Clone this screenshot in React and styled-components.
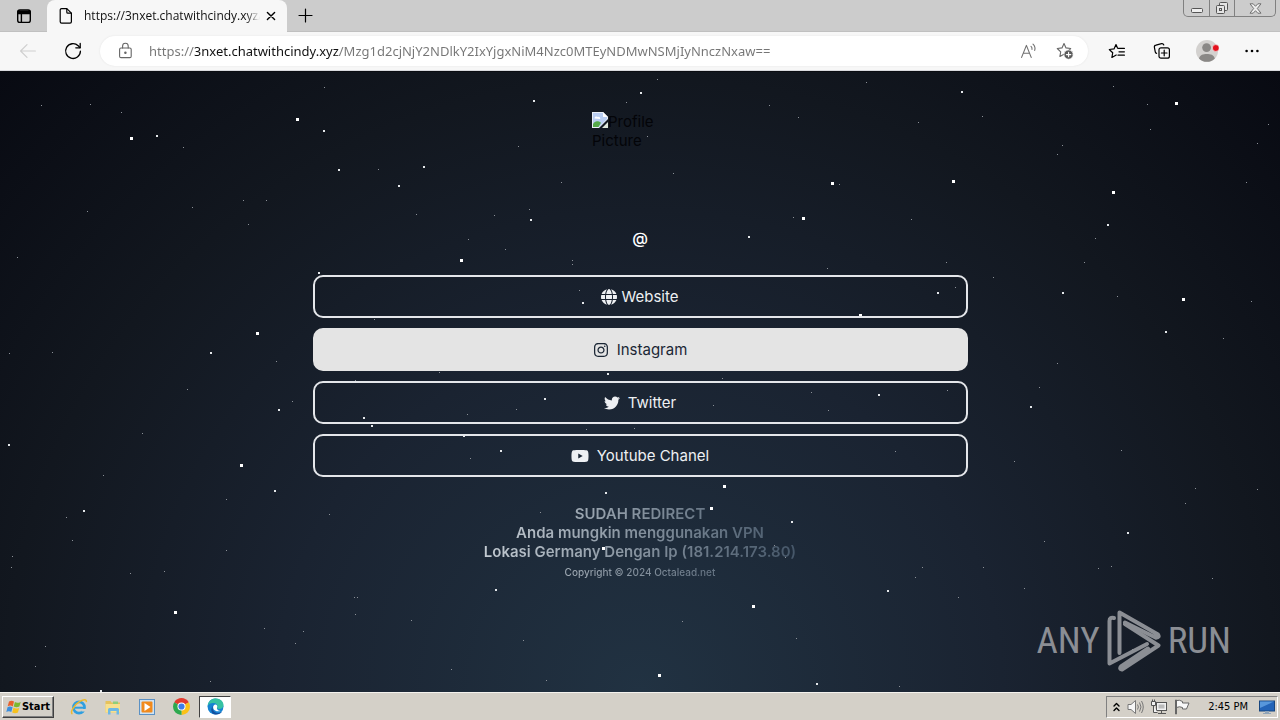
import React, { useState } from 'react';
import styled, { createGlobalStyle, css } from 'styled-components';
import { FaGlobe, FaInstagram, FaTwitter, FaYoutube } from 'react-icons/fa6';

const GlobalStyle = createGlobalStyle`
  * {
    box-sizing: border-box;
  }
  body {
    margin: 0;
    font-family: "Open Sans", "Noto Sans", sans-serif;
  }
  button {
    font-family: inherit;
    padding: 0;
    border: none;
    background: none;
    color: inherit;
  }
`;

const Desktop = styled.div`
  min-height: 100vh;
  display: flex;
  flex-direction: column;
  background: #d4d0c8;
`;

/* browser chrome */

const TabStrip = styled.header`
  height: 32px;
  display: flex;
  align-items: stretch;
  background: #cccccc;
  border-bottom: 1px solid #c0c0c0;
`;

const StripButton = styled.button`
  width: ${({ $width }) => $width}px;
  display: flex;
  align-items: center;
  justify-content: center;
`;

const Tab = styled.div`
  width: 240px;
  height: 32px;
  display: flex;
  align-items: center;
  padding: 0 9px 0 11px;
  background: #f7f7f7;
  border-radius: 8px 8px 0 0;
`;

const TabTitle = styled.span`
  flex: 1;
  margin: 0 4px 0 10px;
  overflow: hidden;
  white-space: nowrap;
  font-size: 12px;
  line-height: 16px;
  color: #111;
  mask-image: linear-gradient(to right, #000 92%, transparent 100%);
`;

const Spacer = styled.div`
  flex: 1;
`;

const WindowControls = styled.div`
  display: flex;
  height: 17px;
  margin-right: 4px;
  border: 1px solid #808080;
  border-top: none;
  border-radius: 0 0 5px 5px;
`;

const ControlButton = styled.button`
  width: ${({ $wide }) => ($wide ? 41 : 25)}px;
  display: flex;
  align-items: center;
  justify-content: center;
  & + & {
    border-left: 1px solid #808080;
  }
`;

const Toolbar = styled.div`
  height: 39px;
  display: flex;
  align-items: center;
  padding: 0 6px 0 5px;
  background: #f7f7f7;
  border-bottom: 1px solid #d9dade;
`;

const ToolButton = styled.button`
  width: 45px;
  height: 30px;
  display: flex;
  align-items: center;
  justify-content: center;
`;

const AddressBar = styled.label`
  flex: 1;
  height: 30px;
  display: flex;
  align-items: center;
  margin: 0 6px 0 5px;
  padding: 0 5px 0 18px;
  border-radius: 15px;
  background: #ffffff;
  box-shadow: 0 0 2px #e2e2e2;
`;

const AddressInput = styled.input`
  flex: 1;
  min-width: 0;
  height: 24px;
  margin-left: 16px;
  padding: 0;
  border: none;
  outline: none;
  font-family: "Noto Sans", "Open Sans", sans-serif;
  font-size: 13px;
  -webkit-text-fill-color: transparent;
  background: linear-gradient(to right, #757575 46px, #111 46px, #111 190px, #757575 190px);
  background-clip: text;
  -webkit-background-clip: text;
`;

const BarButton = styled.button`
  width: 36px;
  height: 24px;
  display: flex;
  align-items: center;
  justify-content: center;
`;

/* web page */

const Page = styled.main`
  position: relative;
  flex: 1;
  overflow: hidden;
  display: flex;
  flex-direction: column;
  align-items: center;
  padding: 40px 20px 0;
  border-top: 1px solid #0b0d12;
  background: radial-gradient(ellipse at bottom, #213242 0%, #1a2331 40%, #12171f 70%, #080a12 100%);
  font-family: Inter, "Liberation Sans", sans-serif;
  font-size: 15px;
  line-height: 19px;
`;

const Sky = styled.svg`
  position: absolute;
  top: 0;
  left: 0;
  width: 100%;
  height: 100%;
  pointer-events: none;
`;

const Avatar = styled.div`
  width: 96px;
  height: 96px;
  color: #030408;
  svg {
    vertical-align: top;
  }
`;

const Handle = styled.h1`
  margin: 21px 0 27px;
  font-size: 16px;
  line-height: 19px;
  font-weight: 500;
  color: #ffffff;
`;

const LinkList = styled.nav`
  position: relative;
  width: 100%;
  max-width: 655px;
  display: flex;
  flex-direction: column;
  gap: 10px;
`;

const LinkButton = styled.a`
  height: 43px;
  display: flex;
  align-items: center;
  justify-content: center;
  gap: ${({ $tight }) => ($tight ? 4 : 8)}px;
  border: 2px solid #e4e6ea;
  border-radius: 10px;
  color: #eef0f3;
  text-decoration: none;
  ${({ $active }) =>
    $active &&
    css`
      background: #e4e4e4;
      border-color: #e4e4e4;
      color: #1b2735;
    `}
`;

const Footer = styled.footer`
  width: 100%;
  max-width: 655px;
  margin-top: 27px;
  text-align: center;
  font-weight: 600;
  background: linear-gradient(to right, #e8edf1 12%, #3a4c5f 78%);
  background-clip: text;
  -webkit-background-clip: text;
  -webkit-text-fill-color: transparent;
  p {
    margin: 0;
  }
`;

const Copyright = styled.small`
  display: block;
  font-size: 10px;
  line-height: 22px;
  font-weight: 500;
`;

const Watermark = styled.div`
  position: absolute;
  right: 49px;
  bottom: 20px;
  display: flex;
  align-items: center;
  gap: 7px;
  font-family: "Roboto Condensed", "Open Sans Condensed", "DejaVu Sans Condensed", sans-serif;
  font-size: 37px;
  line-height: 62px;
  color: #8b8e94;
`;

/* taskbar */

const Taskbar = styled.footer`
  height: 28px;
  display: flex;
  align-items: center;
  padding: 2px;
  border-top: 1px solid #f4f2ee;
  background: #d4d0c8;
  font-family: "DejaVu Sans Condensed", "Liberation Sans", sans-serif;
  font-size: 11px;
  color: #000;
`;

const StartButton = styled.button`
  width: 52px;
  height: 22px;
  display: flex;
  align-items: center;
  justify-content: center;
  margin-right: 8px;
  border: 1px solid;
  border-color: #fff #404040 #404040 #fff;
  box-shadow: inset -1px -1px 0 #808080;
  font-weight: 700;
  font-size: 11px;
`;

const TaskButton = styled.button`
  width: 34px;
  height: 22px;
  display: flex;
  align-items: center;
  justify-content: center;
  ${({ $active }) =>
    $active &&
    css`
      width: 32px;
      margin-left: 1px;
      background: #fff;
      border: 1px solid;
      border-color: #404040 #fff #fff #404040;
    `}
`;

const Tray = styled.div`
  height: 22px;
  display: flex;
  align-items: center;
  gap: 7px;
  padding: 0 2px 0 6px;
  border: 1px solid;
  border-color: #808080 #fff #fff #808080;
`;

const Clock = styled.time`
  margin: 0 4px 0 10px;
`;

const smallStars = [
  [41, 104], [90, 103], [121, 111], [183, 146], [87, 210], [17, 256], [192, 206], [243, 199], [266, 199],
  [248, 223], [324, 86], [378, 168], [416, 213], [494, 214], [529, 208], [518, 145], [561, 181], [626, 101],
  [657, 78], [647, 135], [673, 172], [769, 104], [798, 116], [866, 81], [982, 115], [839, 183], [918, 121],
  [1147, 103], [1113, 85], [1150, 128], [1057, 153], [1062, 144], [1257, 142], [1246, 181], [1268, 123],
  [505, 248], [468, 238], [572, 259], [572, 263], [827, 267], [793, 216], [911, 218], [946, 261], [993, 276],
  [955, 286], [1117, 295], [1084, 261], [1095, 237], [579, 289], [374, 318], [9, 352], [52, 351], [187, 388],
  [142, 432], [103, 474], [226, 498], [276, 360], [292, 400], [355, 379], [439, 371], [722, 377], [811, 391],
  [947, 389], [1039, 386], [828, 409], [713, 404], [516, 408], [467, 413], [586, 428], [634, 427], [470, 457],
  [895, 450], [1057, 362], [1223, 337], [1251, 300], [1185, 502], [1195, 487], [1014, 460], [1121, 449],
  [983, 566], [1257, 488], [1212, 577], [1098, 567], [1111, 565], [958, 596], [1024, 587], [1044, 540],
  [915, 576], [922, 566], [540, 511], [329, 513], [66, 516], [72, 539], [12, 555], [11, 566], [130, 572],
  [164, 570], [226, 549], [264, 627], [303, 630], [295, 642], [354, 596], [357, 596], [355, 613], [411, 619],
  [451, 668], [523, 639], [682, 620], [796, 637], [546, 679], [45, 645], [35, 665], [210, 680], [774, 544],
  [785, 556], [899, 685], [1132, 648],
];

const mediumStars = [
  [534, 100], [641, 92], [157, 135], [324, 130], [339, 169], [424, 166], [399, 185], [531, 219], [749, 236],
  [962, 91], [1108, 224], [319, 272], [583, 302], [938, 292], [1063, 292], [1166, 331], [211, 352], [608, 373],
  [545, 398], [364, 417], [372, 425], [501, 450], [279, 409], [9, 444], [275, 490], [84, 510], [1031, 406],
  [879, 394], [606, 492], [792, 521], [1128, 532], [496, 589], [888, 590], [817, 683], [101, 690], [464, 435],
];

const largeStars = [
  [131, 137], [297, 118], [832, 182], [953, 180], [803, 217], [1113, 191], [461, 259], [860, 314], [257, 332],
  [1183, 298], [241, 464], [724, 485], [711, 507], [753, 605], [175, 611], [659, 674], [1176, 102], [603, 547],
];

const starLayers = [
  { size: 1, fill: '#8b9097', stars: smallStars },
  { size: 2, fill: '#e4e7ea', stars: mediumStars },
  { size: 3, fill: '#ffffff', stars: largeStars },
];

const links = [
  { label: 'Website', Icon: FaGlobe, size: 16, tight: true },
  { label: 'Instagram', Icon: FaInstagram, size: 16, active: true },
  { label: 'Twitter', Icon: FaTwitter, size: 16 },
  { label: 'Youtube Chanel', Icon: FaYoutube, size: 18 },
];

const Starfield = () => (
  <Sky aria-hidden="true">
    <g transform="translate(0 -71)">
      {starLayers.map(({ size, fill, stars }) =>
        stars.map(([x, y]) => (
          <rect
            key={`${x}-${y}`}
            x={size === 1 ? x : x - 1}
            y={size === 1 ? y : y - 1}
            width={size}
            height={size}
            fill={fill}
          />
        ))
      )}
    </g>
  </Sky>
);

const line = { fill: 'none', stroke: 'currentColor', strokeLinecap: 'round', strokeLinejoin: 'round' };

const TabActionsIcon = () => (
  <svg width="16" height="16" viewBox="0 0 16 16" {...line} strokeWidth="1.4">
    <rect x="1.7" y="2" width="12.6" height="12.4" rx="2.2" />
    <path d="M2 3.2h12v2.4H2z" fill="currentColor" />
    <path d="M5.4 6v8" />
  </svg>
);

const PageIcon = () => (
  <svg width="16" height="18" viewBox="0 0 16 18" {...line} strokeWidth="1.2">
    <path d="M3.6 1.6h5.2l4.6 4.6v8.6a1.4 1.4 0 0 1-1.4 1.4H3.6a1.4 1.4 0 0 1-1.4-1.4V3a1.4 1.4 0 0 1 1.4-1.4z" />
    <path d="M8.8 1.8v3.4a1 1 0 0 0 1 1h3.4" />
  </svg>
);

const CloseIcon = () => (
  <svg width="10" height="10" viewBox="0 0 10 10" {...line} strokeWidth="1.4">
    <path d="M1.4 1.4l7.2 7.2M8.6 1.4L1.4 8.6" />
  </svg>
);

const PlusIcon = () => (
  <svg width="15" height="15" viewBox="0 0 15 15" {...line} strokeWidth="1.2">
    <path d="M7.5 1v13M1 7.5h13" />
  </svg>
);

const BackIcon = () => (
  <svg width="18" height="16" viewBox="0 0 18 16" {...line} stroke="#cfcfcf" strokeWidth="1.2">
    <path d="M16.4 8H1.6M8 1.6L1.6 8 8 14.4" />
  </svg>
);

const ReloadIcon = () => (
  <svg width="18" height="18" viewBox="0 0 18 18" {...line} strokeWidth="1.3">
    <path d="M16.4 9.2A7.4 7.4 0 1 1 14.2 3.8L16 5.6" />
    <path d="M16.2 1.4v4.4h-4.4" />
  </svg>
);

const LockIcon = () => (
  <svg width="15" height="18" viewBox="0 0 15 18" {...line} stroke="#666" strokeWidth="1.1">
    <rect x="1.6" y="6" width="11.6" height="9.6" rx="1.4" />
    <path d="M4.6 6V4a2.8 2.8 0 0 1 5.6 0v2" />
    <circle cx="7.4" cy="10.8" r=".7" fill="#666" />
  </svg>
);

const ReadAloudIcon = () => (
  <svg width="18" height="16" viewBox="0 0 18 16" {...line} stroke="#707070" strokeWidth="1.1">
    <path d="M1.6 14.4L6.4 2.4l4.8 12M3.3 10.2h6.2" />
    <path d="M11 3.4c.9.8 1.2 1.8 1 3M13 1.2c1.9 1.8 2.4 4 1.7 6.2" />
  </svg>
);

const AddFavoriteIcon = () => (
  <svg width="18" height="18" viewBox="0 0 18 18" {...line} stroke="#666" strokeWidth="1.1">
    <path d="M8 1.6l2 4.3 4.7.6-3.4 3.3.8 4.7L8 12.2l-4.1 2.3.8-4.7L1.3 6.5 6 5.9z" />
    <circle cx="12.6" cy="12.6" r="4.6" fill="#5c5c5c" stroke="#fff" strokeWidth=".6" />
    <path d="M12.6 10.4v4.4M10.4 12.6h4.4" stroke="#fff" />
  </svg>
);

const FavoritesIcon = () => (
  <svg width="18" height="16" viewBox="0 0 18 16" {...line} strokeWidth="1.2">
    <path d="M9.6 5.2L8 1.6 6 5.9l-4.7.6 3.4 3.3-.8 4.7L8.2 12" />
    <path d="M10.4 5.4h6M11 8.8h5.4M10 12.2h6.4" />
  </svg>
);

const CollectionsIcon = () => (
  <svg width="18" height="18" viewBox="0 0 18 18" {...line} strokeWidth="1.2">
    <path d="M3.6 11.4A2 2 0 0 1 2.2 9.6L1.4 5.4A2 2 0 0 1 3 3.1l5.6-1.4a2 2 0 0 1 2.2 1.3" />
    <rect x="6" y="5.8" width="10.4" height="10.4" rx="2" />
    <path d="M11.2 8.2v5.6M8.4 11h5.6" />
  </svg>
);

const ProfileIcon = () => (
  <svg width="24" height="24" viewBox="0 0 24 24">
    <circle cx="12" cy="12" r="11" fill="#d3d1cf" />
    <circle cx="11.6" cy="8.6" r="4.4" fill="#8a8886" />
    <path d="M4 19.4c1-3.6 4-4.4 7.8-4.4s7 .8 8 4.4A11 11 0 0 1 4 19.4z" fill="#8a8886" />
    <circle cx="20.8" cy="9" r="3.4" fill="#e3101c" stroke="#f7f7f7" strokeWidth=".6" />
  </svg>
);

const MoreIcon = () => (
  <svg width="14" height="4" viewBox="0 0 14 4" fill="currentColor">
    <circle cx="1.6" cy="2" r="1.3" />
    <circle cx="7" cy="2" r="1.3" />
    <circle cx="12.4" cy="2" r="1.3" />
  </svg>
);

const MinimizeIcon = () => (
  <svg width="12" height="12" viewBox="0 0 12 12" fill="#eee" stroke="#555">
    <rect x=".5" y="6.5" width="11" height="4" rx="1" />
  </svg>
);

const RestoreIcon = () => (
  <svg width="14" height="14" viewBox="0 0 14 14" fill="#e4e4e4" stroke="#555">
    <rect x="4.5" y="1.5" width="8" height="8" rx="1" />
    <rect x="1.5" y="4.5" width="8" height="8" rx="1" />
    <rect x="4.5" y="7.5" width="2" height="2" />
  </svg>
);

const WindowCloseIcon = () => (
  <svg width="13" height="11" viewBox="0 0 13 11" fill="#eee" stroke="#666" strokeWidth=".9">
    <path d="M1 .8h3.2l2.3 2.5L8.8.8H12L8.3 5.5 12 10.2H8.8L6.5 7.7l-2.3 2.5H1l3.7-4.7z" />
  </svg>
);

const BrokenImageIcon = () => (
  <svg width="16" height="16" viewBox="0 0 16 16">
    <path d="M0 0h11l5 5v2L7 16H0z" fill="#e9eef6" />
    <path d="M1 1h10v4h4v2l-8 8H1z" fill="#b9cdf1" />
    <path d="M2.5 6.5a2 2 0 0 1 3.4-1.5 1.7 1.7 0 0 1 2.3 2z" fill="#fff" />
    <path d="M1 15v-3c2-3 4.5-3.5 8-1.2L6.5 15z" fill="#55a94a" />
    <path d="M11 0v5h5z" fill="#fff" />
    <path d="M16 10v6h-6z" fill="#dfe8dc" />
  </svg>
);

const AnyRunLogo = () => (
  <svg width="54" height="62" viewBox="0 0 54 62" fill="none" stroke="#8b8e94" strokeWidth="4" strokeLinecap="round" strokeLinejoin="round">
    <path d="M12.5 43V2.5L51 24.5q2 3-2 3.2L18 12.500" />
    <path d="M7 8Q2.5 7 2.5 11v42.5L40 34" />
    <path d="M18 14l33.5 21.5L15 59.5q-3-.5-1-3L41 38.5" />
  </svg>
);

const WindowsFlagIcon = () => (
  <svg width="16" height="16" viewBox="0 0 16 16">
    <path d="M3 2.5c2-1.2 3.5-1 5 .1L6.8 7.4C5 6.3 3.6 6.3 1.7 7.3z" fill="#e8612c" />
    <path d="M8.9 3.1c1.7 1 3.4.9 5.8-.2l-1.3 4.7c-2 1-3.8 1-5.7 0z" fill="#7cb82f" />
    <path d="M1.5 8.2c1.8-1 3.4-.9 5.1.1L5.3 13c-1.7-1.1-3.2-1.1-5 0z" fill="#3b8ede" />
    <path d="M7.5 8.8c1.9 1 3.6 1 5.7.1L11.9 13.5c-2 1-3.8 1-5.7 0z" fill="#f6c11e" />
  </svg>
);

const ExplorerIcon = () => (
  <svg width="18" height="18" viewBox="0 0 18 18" fill="none">
    <circle cx="9" cy="9.5" r="5.6" stroke="#2f9fe0" strokeWidth="2.6" />
    <path d="M4.5 9.7h10" stroke="#2f9fe0" strokeWidth="2" />
    <path d="M11.5 11h5v2.5h-5z" fill="#d4d0c8" />
    <path d="M2.4 16C-.5 14.5 4 7 9.5 3.6c4-2.5 7.5-2.6 6.8.6" stroke="#edb92e" strokeWidth="1.5" />
  </svg>
);

const FolderIcon = () => (
  <svg width="18" height="18" viewBox="0 0 18 18">
    <path d="M1.5 3h5l1 1.5H16v10H1.5z" fill="#e6c25c" />
    <path d="M9 3.5h5v3H9z" fill="#8fce7a" />
    <path d="M1.5 6H16v8.5H1.5z" fill="#f7e08f" />
    <path d="M4 16.5v-5q0-1.5 1.5-1.5h8q1.5 0 1.5 1.5v5h-2.5V13h-6v3.5z" fill="#6eb8e4" />
  </svg>
);

const MediaIcon = () => (
  <svg width="18" height="18" viewBox="0 0 18 18">
    <rect x="1.5" y="1.5" width="15" height="15" fill="#cfe2f2" stroke="#5b91c4" />
    <rect x="3.5" y="3.5" width="11" height="11" rx="1" fill="#f18a1c" />
    <path d="M6.5 5l6 4-6 4z" fill="#fff" />
  </svg>
);

const ChromeIcon = () => (
  <svg width="17" height="17" viewBox="0 0 16 16">
    <path d="M8 8L1.1 4a8 8 0 0 1 13.8 0z" fill="#e33b2e" />
    <path d="M8 8l6.9-4A8 8 0 0 1 8 16z" fill="#fbc116" />
    <path d="M8 8v8A8 8 0 0 1 1.1 4z" fill="#2da94f" />
    <circle cx="8" cy="8" r="3.8" fill="#fff" />
    <circle cx="8" cy="8" r="2.9" fill="#3f7de8" />
  </svg>
);

const EdgeIcon = () => (
  <svg width="17" height="17" viewBox="0 0 17 17">
    <circle cx="8.5" cy="8.5" r="8" fill="#1683d2" />
    <path d="M.6 8C1.3 3 4.5.5 8.8.5c4.7 0 7.7 3.3 7.7 6.5 0 2.8-2 4-4.2 4-1.5 0-2.5-.5-2.3-1.2C11.5 7 9 5 6 5 3.5 5 1.5 6 .6 8z" fill="#36c2a2" />
    <path d="M6.5 7.2c-2 2.3-.6 7.3 4.2 7.8 2 .2 3.6-.5 4.6-1.4-1.5 2.2-4 3.1-6.8 2.9C4.2 16 2.7 11 6.5 7.2z" fill="#124f9f" />
    <path d="M10 9.6c.7-1.2.2-2.7-1.2-3.2-2 0-3.2 2-2.5 4 .8 2.2 4 3.8 7.5 2.5-1 .3-4.5-.6-3.8-3.3z" fill="#fff" />
  </svg>
);

const ChevronsIcon = () => (
  <svg width="7" height="10" viewBox="0 0 7 10" {...line} strokeWidth="1.4">
    <path d="M1 4l2.5-2.5L6 4M1 8.5L3.5 6 6 8.5" />
  </svg>
);

const VolumeIcon = () => (
  <svg width="17" height="16" viewBox="0 0 17 16" fill="none" stroke="#777">
    <path d="M1 5.5h3L8.5 1.5v13L4 10.5H1z" fill="#f6f6f6" />
    <path d="M10.5 5.5q1.8 2.5 0 5M12.5 3.5q3 4.5 0 9M14.5 2q3.5 6 0 12" />
  </svg>
);

const NetworkIcon = () => (
  <svg width="16" height="16" viewBox="0 0 16 16" fill="#f2f2f2" stroke="#555">
    <rect x="5.5" y="3.5" width="10" height="8" />
    <path d="M7.5 5.5h6v4h-6z" fill="#bbb" stroke="none" />
    <path d="M7 14.5h8M10.5 12v2" />
    <path d="M.5 2.5h4v4h-4zM1.5.5v2M3.5.5v2M2.5 6.5v7h4" />
  </svg>
);

const FlagIcon = () => (
  <svg width="17" height="16" viewBox="0 0 17 16" fill="#f8f8f8" stroke="#666">
    <path d="M2.5 1.5q3-1 6 1v1.5H15L12.5 10h-4V8.5q-3-1.5-6 0" />
    <path d="M1.5 1v14h1V1z" />
  </svg>
);

const ShowDesktopIcon = () => (
  <svg width="16" height="16" viewBox="0 0 16 16">
    <rect x=".5" y="2" width="15" height="10" fill="#2364b8" stroke="#18467f" />
    <path d="M1 2.5h14L1 9z" fill="#5797dc" />
    <path d="M6 12h4v2H6zM4 14h8v1H4z" fill="#91a5b8" />
  </svg>
);

const App = () => {
  const [address, setAddress] = useState(
    'https://3nxet.chatwithcindy.xyz/Mzg1d2cjNjY2NDlkY2IxYjgxNiM4Nzc0MTEyNDMwNSMjIyNnczNxaw=='
  );

  return (
    <Desktop>
      <GlobalStyle />
      <TabStrip>
        <StripButton $width={47} aria-label="Tab actions"><TabActionsIcon /></StripButton>
        <Tab>
          <PageIcon />
          <TabTitle>https://3nxet.chatwithcindy.xyz/M</TabTitle>
          <StripButton $width={14} aria-label="Close tab"><CloseIcon /></StripButton>
        </Tab>
        <StripButton $width={36} aria-label="New tab"><PlusIcon /></StripButton>
        <Spacer />
        <WindowControls>
          <ControlButton aria-label="Minimize"><MinimizeIcon /></ControlButton>
          <ControlButton aria-label="Restore"><RestoreIcon /></ControlButton>
          <ControlButton $wide aria-label="Close"><WindowCloseIcon /></ControlButton>
        </WindowControls>
      </TabStrip>

      <Toolbar>
        <ToolButton aria-label="Back" disabled><BackIcon /></ToolButton>
        <ToolButton aria-label="Reload"><ReloadIcon /></ToolButton>
        <AddressBar>
          <LockIcon />
          <AddressInput
            type="text"
            aria-label="Address"
            spellCheck={false}
            value={address}
            onChange={(e) => setAddress(e.target.value)}
          />
          <BarButton aria-label="Read aloud"><ReadAloudIcon /></BarButton>
          <BarButton aria-label="Add to favorites"><AddFavoriteIcon /></BarButton>
        </AddressBar>
        <ToolButton aria-label="Favorites"><FavoritesIcon /></ToolButton>
        <ToolButton aria-label="Collections"><CollectionsIcon /></ToolButton>
        <ToolButton aria-label="Profile"><ProfileIcon /></ToolButton>
        <ToolButton aria-label="More"><MoreIcon /></ToolButton>
      </Toolbar>

      <Page>
        <Starfield />
        <Avatar>
          <BrokenImageIcon />
          Profile Picture
        </Avatar>
        <Handle>@</Handle>
        <LinkList>
          {links.map(({ label, Icon, size, tight, active }) => (
            <LinkButton key={label} href="#" $tight={tight} $active={active}>
              <Icon size={size} />
              {label}
            </LinkButton>
          ))}
        </LinkList>
        <Footer>
          <p>SUDAH REDIRECT</p>
          <p>Anda mungkin menggunakan VPN</p>
          <p>Lokasi Germany Dengan Ip (181.214.173.80)</p>
          <Copyright>Copyright © 2024 Octalead.net</Copyright>
        </Footer>
        <Watermark>
          <span>ANY</span>
          <AnyRunLogo />
          <span>RUN</span>
        </Watermark>
      </Page>

      <Taskbar>
        <StartButton><WindowsFlagIcon />Start</StartButton>
        <TaskButton aria-label="Internet Explorer"><ExplorerIcon /></TaskButton>
        <TaskButton aria-label="File Explorer"><FolderIcon /></TaskButton>
        <TaskButton aria-label="Media Player"><MediaIcon /></TaskButton>
        <TaskButton aria-label="Chrome"><ChromeIcon /></TaskButton>
        <TaskButton $active aria-label="Edge"><EdgeIcon /></TaskButton>
        <Spacer />
        <Tray>
          <ChevronsIcon />
          <VolumeIcon />
          <NetworkIcon />
          <FlagIcon />
          <Clock>2:45 PM</Clock>
          <ShowDesktopIcon />
        </Tray>
      </Taskbar>
    </Desktop>
  );
};

export default App;
